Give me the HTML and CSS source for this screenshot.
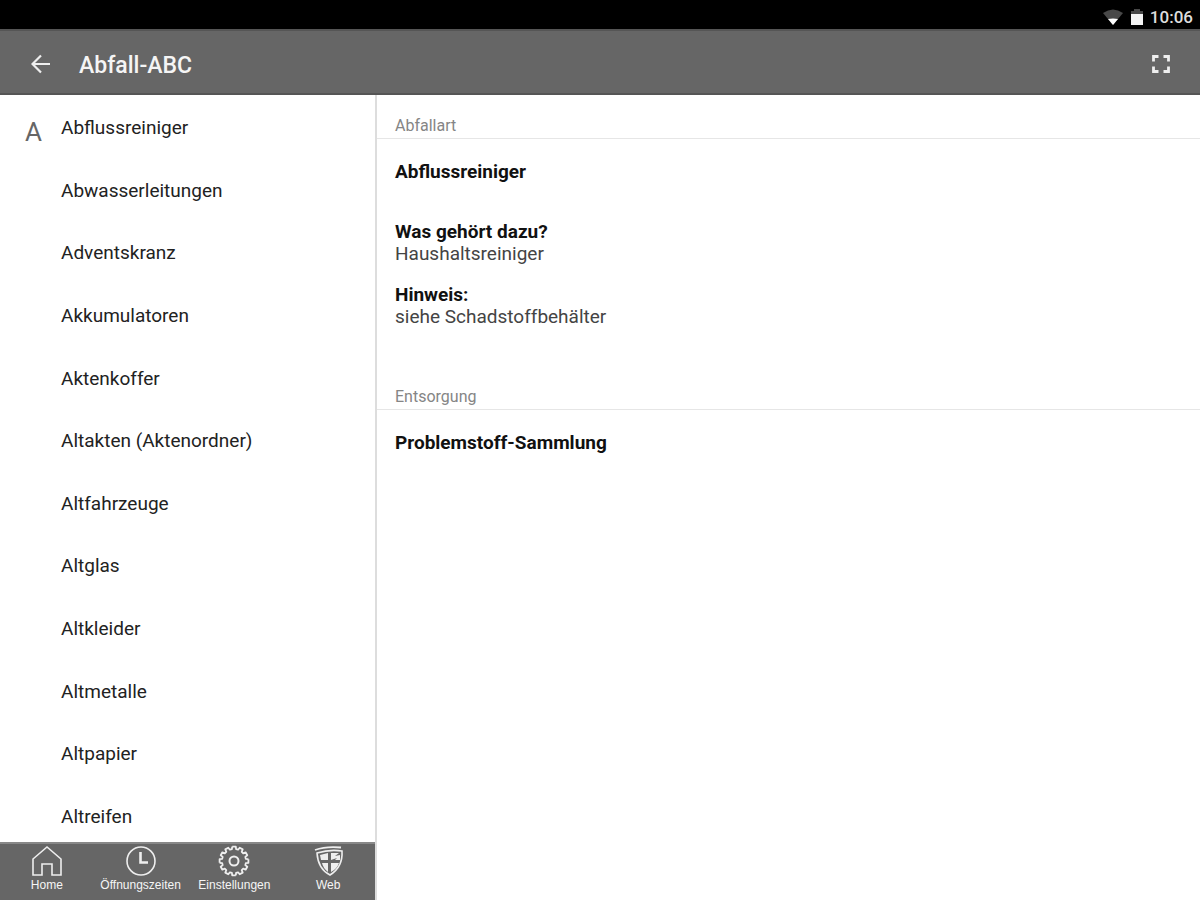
FILE: index.html
```html
<!DOCTYPE html>
<html lang="de">
<head>
<meta charset="utf-8">
<meta name="viewport" content="width=device-width, initial-scale=1">
<title>Abfall-ABC</title>
<link rel="stylesheet" href="styles.css">
</head>
<body class="app">
<div class="status">
  <svg class="status-wifi" viewBox="0 0 20 16" aria-hidden="true"><path d="M0 4Q10-3 20 4L10 16Z" fill="#484848"/><path d="M5 10Q10 9 15 10L10 16Z" fill="#fff"/></svg>
  <svg class="status-battery" viewBox="0 0 12 16" aria-hidden="true"><path d="M0 5V2h3V0h6v2h3v3z" fill="#484848"/><path d="M0 5h12v11H0z" fill="#f4f4f4"/></svg>
  <span class="status-time">10:06</span>
</div>
<header class="bar">
  <button class="icon-button" type="button" aria-label="Zurück"><svg viewBox="0 0 20 20" aria-hidden="true"><path d="M19 10H2M10 1.5L1.5 10l8.500 8.500" fill="none" stroke="#eee" stroke-width="2.200"/></svg></button>
  <h1 class="bar-title">Abfall-ABC</h1>
  <button class="icon-button" type="button" aria-label="Vollbild"><svg viewBox="0 0 20 20" aria-hidden="true"><path d="M2.500 7.500v-5h5M12.500 2.500h5v5M17.500 12.500v5h-5M7.500 17.500h-5v-5" fill="none" stroke="#eee" stroke-width="2.800"/></svg></button>
</header>
<div class="panes">
  <aside class="side">
    <section class="index">
      <h2 class="index-letter">A</h2>
      <ul class="index-list">
        <li><a href="#detail">Abflussreiniger</a></li>
        <li><a href="#detail">Abwasserleitungen</a></li>
        <li><a href="#detail">Adventskranz</a></li>
        <li><a href="#detail">Akkumulatoren</a></li>
        <li><a href="#detail">Aktenkoffer</a></li>
        <li><a href="#detail">Altakten (Aktenordner)</a></li>
        <li><a href="#detail">Altfahrzeuge</a></li>
        <li><a href="#detail">Altglas</a></li>
        <li><a href="#detail">Altkleider</a></li>
        <li><a href="#detail">Altmetalle</a></li>
        <li><a href="#detail">Altpapier</a></li>
        <li><a href="#detail">Altreifen</a></li>
      </ul>
    </section>
    <nav class="tabs">
      <a class="tab" href="#home"><svg viewBox="0 0 32 32" aria-hidden="true"><path d="M2 30V14L16 2l14 12v16h-9V19H11v11z"/></svg>Home</a>
      <a class="tab" href="#zeiten"><svg viewBox="0 0 32 32" aria-hidden="true"><circle cx="16" cy="16" r="14"/><path d="M15.500 7v10.500H23" stroke-width="2.600"/></svg>Öffnungszeiten</a>
      <a class="tab" href="#einstellungen"><svg viewBox="-16 -16 32 32" aria-hidden="true"><g stroke-linejoin="round" stroke-width="1.800"><path id="gear-quarter" d="M14.400-1.800V1.800L11.800 2.100 11.300 4.100 13.300 5.700 11.600 8.700 9.200 7.700 7.700 9.200 8.700 11.600 5.700 13.300 4.100 11.300 2.100 11.800 1.800 14.400"/><use href="#gear-quarter" transform="rotate(90)"/><use href="#gear-quarter" transform="rotate(180)"/><use href="#gear-quarter" transform="rotate(270)"/></g><circle r="4.500" stroke-width="2"/></svg>Einstellungen</a>
      <a class="tab" href="#web"><svg viewBox="0 0 32 32" aria-hidden="true"><path d="M3 5Q14 1 29 2.500" stroke-width="1.800"/><path d="M5 8Q18 4 30 6Q31 22 18 30Q6 24 5 8z"/><path class="solid" d="M8 10l8-2v7H9zM10 18h6v9q-5-4-6-9zM19 18h8q-2 6-8 9zM19 8h8l-4 3 5-1v5h-5l2-2-6 2z"/></svg>Web</a>
    </nav>
  </aside>
  <main class="detail" id="detail">
    <section class="block">
      <h2 class="block-label">Abfallart</h2>
      <div class="block-body">
        <h3>Abflussreiniger</h3>
        <dl class="facts">
          <dt>Was gehört dazu?</dt>
          <dd>Haushaltsreiniger</dd>
          <dt>Hinweis:</dt>
          <dd>siehe Schadstoffbehälter</dd>
        </dl>
      </div>
    </section>
    <section class="block">
      <h2 class="block-label">Entsorgung</h2>
      <div class="block-body">
        <h3>Problemstoff-Sammlung</h3>
      </div>
    </section>
  </main>
</div>
</body>
</html>
```

FILE: styles.css
```css
* { box-sizing: border-box; }

.app {
  margin: 0;
  height: 100vh;
  display: flex;
  flex-direction: column;
  background: #fff;
  color: #222;
  font-family: Roboto, "Liberation Sans", sans-serif;
  font-size: 19px;
  line-height: 24px;
}

h1, h2, h3, ul, dl, dd { margin: 0; padding: 0; }
a { color: inherit; text-decoration: none; }

.status {
  display: flex;
  align-items: center;
  justify-content: flex-end;
  padding: 4px 7px 0 0;
  height: 29px;
  background: #000;
  color: #ddd;
}
.status-wifi { width: 20px; height: 16px; margin-right: 8px; }
.status-battery { width: 12px; height: 16px; margin-right: 7px; }
.status-time { font-size: 17px; font-weight: 500; }

.bar {
  display: flex;
  align-items: center;
  height: 66px;
  padding: 4px 27px 0 29px;
  background: #666;
  border-top: 2px solid #555;
  border-bottom: 2px solid #555;
  color: #f5f5f5;
}
.bar-title {
  flex: 1;
  margin-left: 26px;
  padding-top: 3px;
  font-size: 23px;
  font-weight: 500;
  line-height: 28px;
}
.icon-button {
  display: flex;
  padding: 2px;
  border: 0;
  background: none;
}
.icon-button svg { width: 20px; height: 20px; }

.panes { flex: 1; min-height: 0; display: flex; }

.side {
  width: 377px;
  flex: none;
  display: flex;
  flex-direction: column;
  border-right: 2px solid #ddd;
}
.index { flex: 1; min-height: 0; display: flex; padding: 21px 0 13px; }
.index-letter {
  width: 61px;
  padding: 4px 0 0 25px;
  color: #666;
  font-size: 26px;
  font-weight: 400;
}
.index-list {
  flex: 1;
  display: flex;
  flex-direction: column;
  justify-content: space-between;
  list-style: none;
}

.tabs {
  display: grid;
  grid-template-columns: repeat(4, 1fr);
  height: 58px;
  background: #666;
  border-top: 2px solid #888;
  color: #f5f5f5;
}
.tab {
  display: flex;
  flex-direction: column;
  align-items: center;
  font: 12px/16px "Liberation Sans", Arial, sans-serif;
  padding-top: 1px;
}
.tab svg {
  width: 32px;
  height: 32px;
  fill: none;
  stroke: #eee;
  stroke-width: 1.6;
}
.tab .solid { fill: #eee; stroke: none; }

.detail { flex: 1; min-width: 0; }
.block-label {
  padding: 19px 18px 0;
  border-bottom: 1px solid #e6e6e6;
  color: #858585;
  font-size: 16px;
  font-weight: 400;
}
.block-body { padding: 21px 18px 19px; }
.block-body h3 { color: #111; font-size: 19px; font-weight: 700; }
.facts { margin-top: 37px; line-height: 22px; }
.facts dt { color: #111; font-weight: 700; }
.facts dd { color: #444; margin-bottom: 19px; }
```
